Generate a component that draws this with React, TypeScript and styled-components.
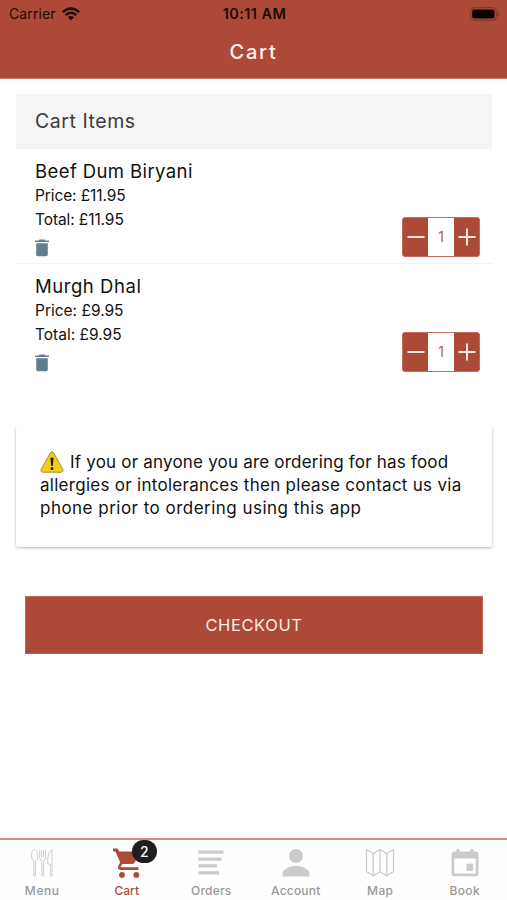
import React from "react";
import styled, { createGlobalStyle } from "styled-components";

const BRAND = "#ad4a37";

const GlobalStyle = createGlobalStyle`
  * { box-sizing: border-box; }
  body {
    margin: 0;
    background: #fff;
    font-family: Inter, "Liberation Sans", sans-serif;
    color: #111;
  }
`;

const Screen = styled.div`
  width: 507px;
  height: 900px;
  display: flex;
  flex-direction: column;
  background: #fff;
  overflow: hidden;
`;

const Header = styled.header`
  height: 79px;
  background: ${BRAND};
  border-bottom: 1px solid #c87768;
`;

const StatusBar = styled.div`
  height: 27px;
  padding: 0 7px 0 9px;
  display: grid;
  grid-template-columns: 1fr auto 1fr;
  align-items: center;
  color: #1d0a07;
`;

const Carrier = styled.div`
  display: flex;
  align-items: center;
  gap: 6px;
  font-size: 14px;
  letter-spacing: 0.1px;
`;

const Clock = styled.div`
  font-size: 14.5px;
  font-weight: 600;
  letter-spacing: 0.4px;
`;

const Battery = styled.svg`
  justify-self: end;
`;

const Title = styled.h1`
  margin: 0;
  height: 50px;
  line-height: 50px;
  text-align: center;
  font-size: 20px;
  font-weight: 500;
  letter-spacing: 1.8px;
  color: #fff3ee;
`;

const Content = styled.main`
  flex: 1;
  padding: 15px 15px 0 16px;
`;

const SectionTitle = styled.h2`
  margin: 0;
  height: 55px;
  line-height: 55px;
  padding-left: 19px;
  background: #f5f5f5;
  color: #3c3c3c;
  font-size: 19.5px;
  font-weight: 400;
  letter-spacing: 0.55px;
`;

const Item = styled.article<{ $divided?: boolean }>`
  height: 115px;
  padding: 10px 12px 0 19px;
  display: flex;
  justify-content: space-between;
  border-bottom: 1px solid ${(p) => (p.$divided ? "#f3f3f3" : "transparent")};
`;

const ItemName = styled.h3<{ $tracking: number }>`
  margin: 0;
  line-height: 25px;
  font-size: 18.5px;
  font-weight: 400;
  letter-spacing: ${(p) => p.$tracking}px;
`;

const ItemLine = styled.p<{ $tracking: number }>`
  margin: 0;
  line-height: 24.3px;
  font-size: 15.5px;
  font-weight: 400;
  letter-spacing: ${(p) => p.$tracking}px;
`;

const TrashButton = styled.button`
  display: block;
  margin-top: 6px;
  padding: 0;
  border: 0;
  background: none;
  line-height: 0;
`;

const Stepper = styled.div`
  margin-top: 58px;
  width: 78px;
  height: 40px;
  display: grid;
  grid-template-columns: 25px 26px 25px;
  border: 1px solid #c56b5b;
  border-radius: 3px;
  background: ${BRAND};
  overflow: hidden;
`;

const StepButton = styled.button`
  padding: 0;
  border: 0;
  display: flex;
  align-items: center;
  justify-content: center;
  background: ${BRAND};
`;

const Quantity = styled.span`
  background: #fff;
  color: #b25f50;
  text-align: center;
  font-size: 14px;
  line-height: 38px;
`;

const Notice = styled.section`
  margin-top: 47px;
  height: 121px;
  padding: 24px 24px;
  border-radius: 2px;
  background: #fff;
  box-shadow: 0 1px 3px rgba(0, 0, 0, 0.28);
  clip-path: inset(0 -4px -6px -4px);
`;

const NoticeLine = styled.p<{ $tracking: number }>`
  margin: 0;
  display: flex;
  align-items: center;
  gap: 6px;
  height: 23.3px;
  white-space: nowrap;
  font-size: 17px;
  letter-spacing: ${(p) => p.$tracking}px;
`;

const Checkout = styled.button`
  display: block;
  margin: 49px 9px 0;
  width: 458px;
  height: 58px;
  padding: 0;
  border: 1px solid #bd6555;
  background: ${BRAND};
  color: #ffece6;
  font-family: inherit;
  font-size: 16.5px;
  letter-spacing: 0.6px;
`;

const TabBar = styled.nav`
  height: 62px;
  display: grid;
  grid-template-columns: repeat(6, 1fr);
  border-top: 2px solid #d68a83;
  background: #fefefe;
`;

const Tab = styled.a<{ $active?: boolean }>`
  display: flex;
  flex-direction: column;
  align-items: center;
  padding-top: 7px;
  color: ${(p) => (p.$active ? BRAND : "#989898")};
`;

const TabIcon = styled.span`
  position: relative;
  height: 32px;
  line-height: 0;
`;

const TabLabel = styled.span<{ $tracking: number }>`
  margin-top: 3px;
  line-height: 18px;
  font-size: 12px;
  font-weight: 500;
  letter-spacing: ${(p) => p.$tracking}px;
`;

const Badge = styled.span`
  position: absolute;
  left: 19px;
  top: -7px;
  width: 25px;
  height: 23px;
  border-radius: 12px;
  background: #1e1e1e;
  color: #fff;
  font-size: 14px;
  font-weight: 500;
  line-height: 23px;
  text-align: center;
`;

const Wifi = () => (
  <svg width="18" height="14" viewBox="0 0 18 14">
    <g fill="none" stroke="#1d0a07" strokeWidth="2.4">
      <path d="M.9 5.2Q9-2.2 17.1 5.2" />
      <path d="M3.7 8.2Q9 3.2 14.3 8.2" />
    </g>
    <path d="M5.9 10.3Q9 7.8 12.1 10.3L9 13.6Z" fill="#1d0a07" />
  </svg>
);

const Trash = () => (
  <svg width="14" height="18" viewBox="0 0 14 18" fill="#5f7f8e">
    <path d="M0 1.4h3.5L4.6.4h4.8l1.1 1H14v1.7H0z" />
    <path d="M1.2 4.2h11.6v11.2q0 1.8-1.8 1.8H3q-1.8 0-1.8-1.8z" />
  </svg>
);

const Sign = ({ plus }: { plus?: boolean }) => (
  <svg width="18" height="18" viewBox="0 0 18 18" stroke="#ffece6" strokeWidth="2">
    <path d={plus ? "M.5 9h17M9 .5v17" : "M.5 9h17"} />
  </svg>
);

const Warning = () => (
  <svg width="24" height="22" viewBox="0 0 24 22">
    <path
      d="M10.6 1.5q1.4-1.8 2.8 0l9.5 17q.9 2.4-1.5 2.7H2.6q-2.4-.3-1.5-2.7z"
      fill="#f3cd16"
      stroke="#a58b35"
    />
    <path d="M10.4 7.1q1.6-1.2 3.2 0L12.7 15h-1.4z" fill="#17150a" />
    <circle cx="12" cy="17.7" r="1.4" fill="#17150a" />
  </svg>
);

const Cutlery = () => (
  <svg width="22" height="32" viewBox="1 0 22 32" fill="none" stroke="#cecece">
    <path d="M4.5 2.5C2.7 2.5 1.5 5 1.5 8.5c0 3 1 5 2.3 5.5v15h1.600V14c1.300-.5 2.300-2.500 2.300-5.500 0-3.500-1.400-6-3.200-6zM9.700 3v8q0 2.300 2.200 3v15h1.500V14q2.200-.7 2.200-3V3M11.600 3v7M13.600 3v7M22 2.500v26.500h-1.600V17h-2.600C17.400 9.500 19 4.200 22 2.500z" />
  </svg>
);

const Cart = () => (
  <svg width="28" height="32" viewBox="0 0 28 32" fill={BRAND}>
    <path
      fillRule="evenodd"
      d="M0 1.500h4.700l1.500 3h19.500q1.700.2 1 1.600l-5 9.500q-.7 1.300-2.100 1.300H9.200l-1.500 2.600q-.1.700.6.700h17.100v2.900H7.500c-2.500-.5-3-2.400-2.300-4l2-3.600L2.500 4.500H0z"
    />
    <circle cx="9" cy="27.900" r="2.900" />
    <circle cx="23.300" cy="27.900" r="2.900" />
  </svg>
);

const Orders = () => (
  <svg width="26" height="32" viewBox="0 0 26 32" fill="#cbcbcb">
    <path d="M.5 3.500h25v3.200H.5zM.5 10.500h23v3.200H.5zM.5 17.300H19v3.200H.5zM.5 24.200h20.700v3.200H.5z" />
  </svg>
);

const Account = () => (
  <svg width="28" height="32" viewBox="0 0 28 32" fill="#cbcbcb">
    <circle cx="14" cy="9.100" r="7" />
    <path d="M.5 29.500v-3.200c0-4.500 8-7.200 13.500-7.200s13.500 2.700 13.500 7.200v3.200z" />
  </svg>
);

const MapIcon = () => (
  <svg width="30" height="32" viewBox="0 0 30 32" fill="none" stroke="#cacaca" strokeWidth="1.200">
    <path d="M1.500 2.500l6.700 4 6.800-4 6.800 4 6.700-4v22.200l-6.700 4-6.800-4-6.800 4-6.700-4zM8.200 6.500v22.200M15 2.500v22.200M21.800 6.500v22.200" />
  </svg>
);

const Book = () => (
  <svg width="28" height="32" viewBox="0 0 28 32" fill="#cbcbcb">
    <path
      fillRule="evenodd"
      d="M5.500 2h3v2.400h11V2h3v2.400H25q2.500.2 2.500 2.600v19.700q-.2 2.500-2.500 2.500H3Q.7 29.200.5 26.700V7Q.7 4.600 3 4.400h2.500zM3.300 11.500v15h21.400v-15z"
    />
    <path d="M15.500 16.700h6.700v7.200h-6.700z" />
  </svg>
);

const items = [
  { name: "Beef Dum Biryani", amount: "£11.95", nameTracking: 0.4, tracking: -0.1 },
  { name: "Murgh Dhal", amount: "£9.95", nameTracking: 0.55, tracking: 0 },
];

const tabs = [
  { label: "Menu", icon: <Cutlery />, tracking: 0.6 },
  { label: "Cart", icon: <Cart />, tracking: 0, badge: 2 },
  { label: "Orders", icon: <Orders />, tracking: 0.2 },
  { label: "Account", icon: <Account />, tracking: 0.2 },
  { label: "Map", icon: <MapIcon />, tracking: 0.4 },
  { label: "Book", icon: <Book />, tracking: 0.4 },
];

export default function App() {
  return (
    <Screen>
      <GlobalStyle />
      <Header>
        <StatusBar>
          <Carrier>
            Carrier
            <Wifi />
          </Carrier>
          <Clock>10:11 AM</Clock>
          <Battery width="30" height="14" viewBox="0 0 30 14">
            <rect x=".7" y=".7" width="25.600" height="12.600" rx="3.500" fill="none" stroke="#783428" />
            <rect x="2.200" y="2.400" width="22.300" height="9.200" rx="2" fill="#080202" />
            <path d="M27.700 5v4q1.600-.5 1.600-2t-1.600-2z" fill="#783428" />
          </Battery>
        </StatusBar>
        <Title>Cart</Title>
      </Header>
      <Content>
        <SectionTitle>Cart Items</SectionTitle>
        {items.map((item, i) => (
          <Item key={item.name} $divided={i < items.length - 1}>
            <div>
              <ItemName $tracking={item.nameTracking}>{item.name}</ItemName>
              <ItemLine $tracking={item.tracking}>Price: {item.amount}</ItemLine>
              <ItemLine $tracking={item.tracking}>Total: {item.amount}</ItemLine>
              <TrashButton aria-label="Remove">
                <Trash />
              </TrashButton>
            </div>
            <Stepper>
              <StepButton aria-label="Decrease">
                <Sign />
              </StepButton>
              <Quantity>1</Quantity>
              <StepButton aria-label="Increase">
                <Sign plus />
              </StepButton>
            </Stepper>
          </Item>
        ))}
        <Notice>
          <NoticeLine $tracking={0.2}>
            <Warning />
            If you or anyone you are ordering for has food
          </NoticeLine>
          <NoticeLine $tracking={0.28}>allergies or intolerances then please contact us via</NoticeLine>
          <NoticeLine $tracking={0.48}>phone prior to ordering using this app</NoticeLine>
        </Notice>
        <Checkout>CHECKOUT</Checkout>
      </Content>
      <TabBar>
        {tabs.map((tab) => (
          <Tab key={tab.label} $active={!!tab.badge}>
            <TabIcon>
              {tab.icon}
              {tab.badge && <Badge>{tab.badge}</Badge>}
            </TabIcon>
            <TabLabel $tracking={tab.tracking}>{tab.label}</TabLabel>
          </Tab>
        ))}
      </TabBar>
    </Screen>
  );
}
